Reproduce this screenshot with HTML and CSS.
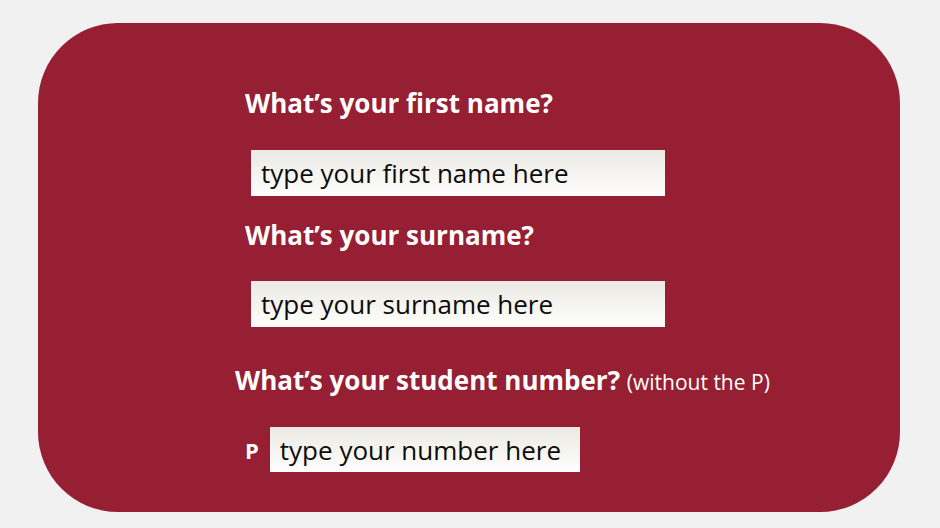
FILE: index.html
```html
<html>
    <head>
        <link rel="stylesheet" href="styles.css">
    </head>
    <body>
        <div class="card">
            <div class="field">
                <label class="question">What’s your first name?</label>
                <input class="answer" type="text" value="type your first name here">
            </div>
            <div class="field">
                <label class="question">What’s your surname?</label>
                <input class="answer" type="text" value="type your surname here">
            </div>
            <div class="field student">
                <label class="question">What’s your student number? <span class="hint">(without the P)</span></label>
                <div class="prefixed">
                    <span class="prefix">P</span>
                    <input class="answer short" type="text" value="type your number here">
                </div>
            </div>
        </div>
    </body>
</html>
```
FILE: styles.css
```css
body {
    background: #f1f1f1;
    font-family: "Open Sans", sans-serif;
    margin: 0;
}
.card {
    background: #961f33;
    border-radius: 80px;
    box-sizing: border-box;
    display: flex;
        flex-direction: column;
    height: 489px;
    margin: 23px 0 0 38px;
    padding: 64px 0 0 207px;
    width: 862px;
}
.field {
    display: flex;
        flex-direction: column;
        align-items: flex-start;
}
.question {
    color: #fff;
    font-size: 26px;
    font-weight: bold;
    line-height: 32px;
}
.hint {
    font-size: 21px;
    font-weight: normal;
}
.answer {
    background: linear-gradient(#ebe9e3, #fefefc);
    border: none;
    box-sizing: border-box;
    color: #0c0c0c;
    font-family: "Open Sans", sans-serif;
    font-size: 26px;
    height: 46px;
    margin: 30px 0 24px 6px;
    outline: none;
    padding: 0 10px;
    width: 414px;
}
.field:first-child .answer {
    margin: 31px 0 23px 6px;
}
.student {
    margin: 13px 0 0 -10px;
}
.prefixed {
    display: flex;
        align-items: center;
    margin-top: 29px;
}
.prefix {
    color: #fff;
    font-size: 22px;
    font-weight: bold;
    margin: 0 11px 0 10px;
}
.answer.short {
    height: 45px;
    margin: 0;
    width: 310px;
}
```
